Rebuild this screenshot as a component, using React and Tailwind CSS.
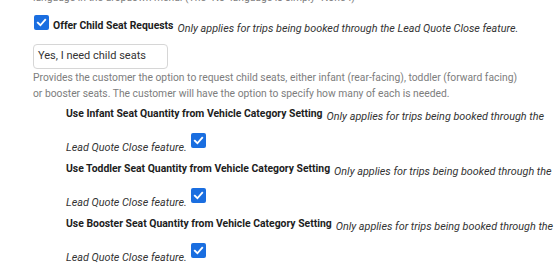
import React from 'react';

const Check = ({ className = '' }) => (
  <span className={`inline-flex shrink-0 items-center justify-center w-[15px] h-[15px] rounded-[2px] bg-[#1a6ee0] ${className}`}>
    <svg width="11" height="11" viewBox="0 0 12 12" fill="none">
      <path d="M2 6.3 L4.8 9 L10 3" stroke="white" strokeWidth="2" strokeLinecap="square" />
    </svg>
  </span>
);

const NOTE = 'Only applies for trips being booked through the';

function SeatSetting({ label }) {
  return (
    <div className="pl-[66px]">
      <div className="h-[26px] flex items-start whitespace-nowrap">
        <span className="text-[10.4px] leading-[14px] font-bold text-[#1d1d1d]">{label}</span>
        <span className="ml-[4px] mt-[3px] text-[10.8px] leading-[14px] italic text-[#333]">{NOTE}</span>
      </div>
      <div className="h-[29px] flex items-start">
        <span className="mt-[8px] text-[10.8px] leading-[14px] italic text-[#333]">Lead Quote Close feature.</span>
        <Check className="ml-[4px]" />
      </div>
    </div>
  );
}

export default function App() {
  return (
    <div className="w-[557px] h-[269px] overflow-hidden bg-white font-['Roboto',sans-serif]">
      <div className="pl-[33px] -mt-[10px]">
        <p className="text-[10.3px] leading-[16px] text-[#7d7d7d] whitespace-nowrap">
          language in the dropdown menu. (The "No" language is simply "None".)
        </p>

        {/* offer child seats */}
        <div className="mt-[9px] flex items-start whitespace-nowrap">
          <Check className="ml-[1px]" />
          <span className="ml-[4px] mt-[4px] text-[10.4px] leading-[14px] font-bold text-[#1d1d1d]">Offer Child Seat Requests</span>
          <span className="ml-[4px] mt-[7px] text-[10.8px] leading-[14px] italic text-[#333]">
            Only applies for trips being booked through the Lead Quote Close feature.
          </span>
        </div>

        <div className="mt-[8px] w-[135px] h-[25px] border border-[#d6d6d6] rounded-[4px] pl-[4px] flex items-center text-[11px] text-[#333] whitespace-nowrap">
          Yes, I need child seats
        </div>

        <p className="mt-[1px] w-[488px] text-[10.3px] leading-[16px] text-[#7d7d7d]">
          Provides the customer the option to request child seats, either infant (rear-facing), toddler (forward facing)
          or booster seats. The customer will have the option to specify how many of each is needed.
        </p>
      </div>

      <div className="mt-[5px]">
        <SeatSetting label="Use Infant Seat Quantity from Vehicle Category Setting" />
        <SeatSetting label="Use Toddler Seat Quantity from Vehicle Category Setting" />
        <SeatSetting label="Use Booster Seat Quantity from Vehicle Category Setting" />
      </div>
    </div>
  );
}
